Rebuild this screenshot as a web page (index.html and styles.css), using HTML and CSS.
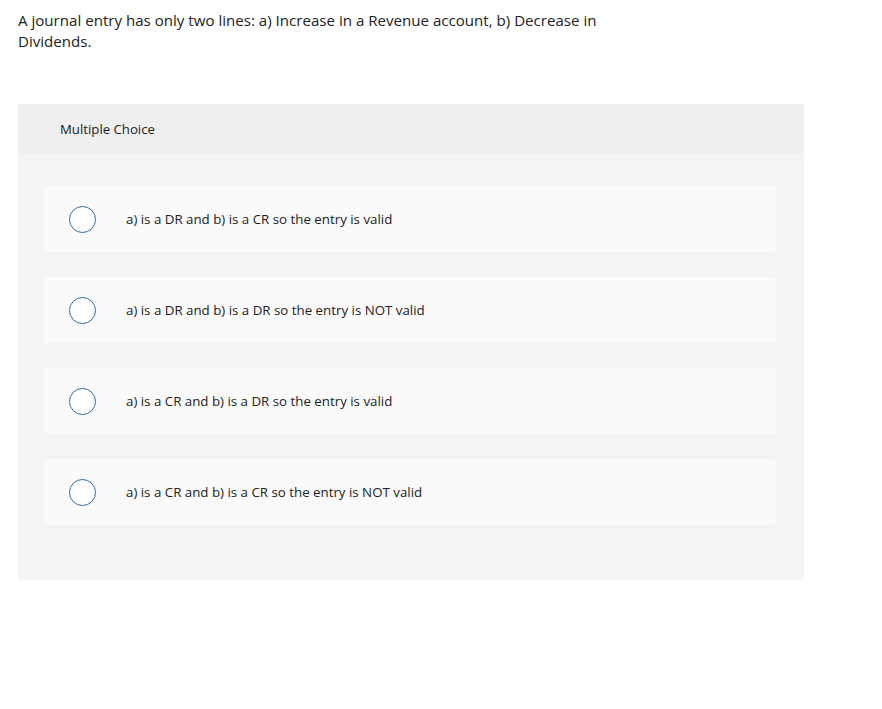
FILE: index.html
```html
<!DOCTYPE html>
<html>
<head>
<meta charset="utf-8">
<link rel="stylesheet" href="styles.css">
</head>
<body>
<div class="page">
  <p class="question">A journal entry has only two lines: a) Increase in a Revenue account, b) Decrease in Dividends.</p>
  <div class="panel">
    <div class="panel-head">Multiple Choice</div>
    <div class="panel-body">
      <div class="option"><span class="radio"></span><span class="label">a) is a DR and b) is a CR so the entry is valid</span></div>
      <div class="option"><span class="radio"></span><span class="label">a) is a DR and b) is a DR so the entry is NOT valid</span></div>
      <div class="option"><span class="radio"></span><span class="label">a) is a CR and b) is a DR so the entry is valid</span></div>
      <div class="option"><span class="radio"></span><span class="label">a) is a CR and b) is a CR so the entry is NOT valid</span></div>
    </div>
  </div>
</div>
</body>
</html>
```

FILE: styles.css
```css
html, body {
  margin: 0;
  padding: 0;
  background: #ffffff;
}
body {
  font-family: "Open Sans", "Liberation Sans", sans-serif;
  color: #222;
}
.page {
  padding: 10px 18px 0 18px;
}
.question {
  margin: 0;
  width: 620px;
  font-size: 15.1px;
  line-height: 21px;
  color: #222;
}
.panel {
  margin-top: 52px;
  width: 786px;
  background: #f4f4f4;
  border-radius: 0 0 4px 4px;
}
.panel-head {
  height: 50px;
  background: #efefef;
  display: flex;
  align-items: center;
  padding-left: 42px;
  font-size: 13.2px;
  color: #222;
}
.panel-body {
  padding: 32px 28px 55px 26px;
  display: flex;
  flex-direction: column;
  gap: 25px;
}
.option {
  height: 66px;
  background: #fafafa;
  border-radius: 3px;
  display: flex;
  align-items: center;
  padding-left: 25px;
}
.radio {
  width: 25px;
  height: 25px;
  border: 1.5px solid #2e6aa5;
  border-radius: 50%;
  background: #fff;
  flex: none;
}
.label {
  margin-left: 30px;
  font-size: 13.3px;
  color: #222;
}
```
